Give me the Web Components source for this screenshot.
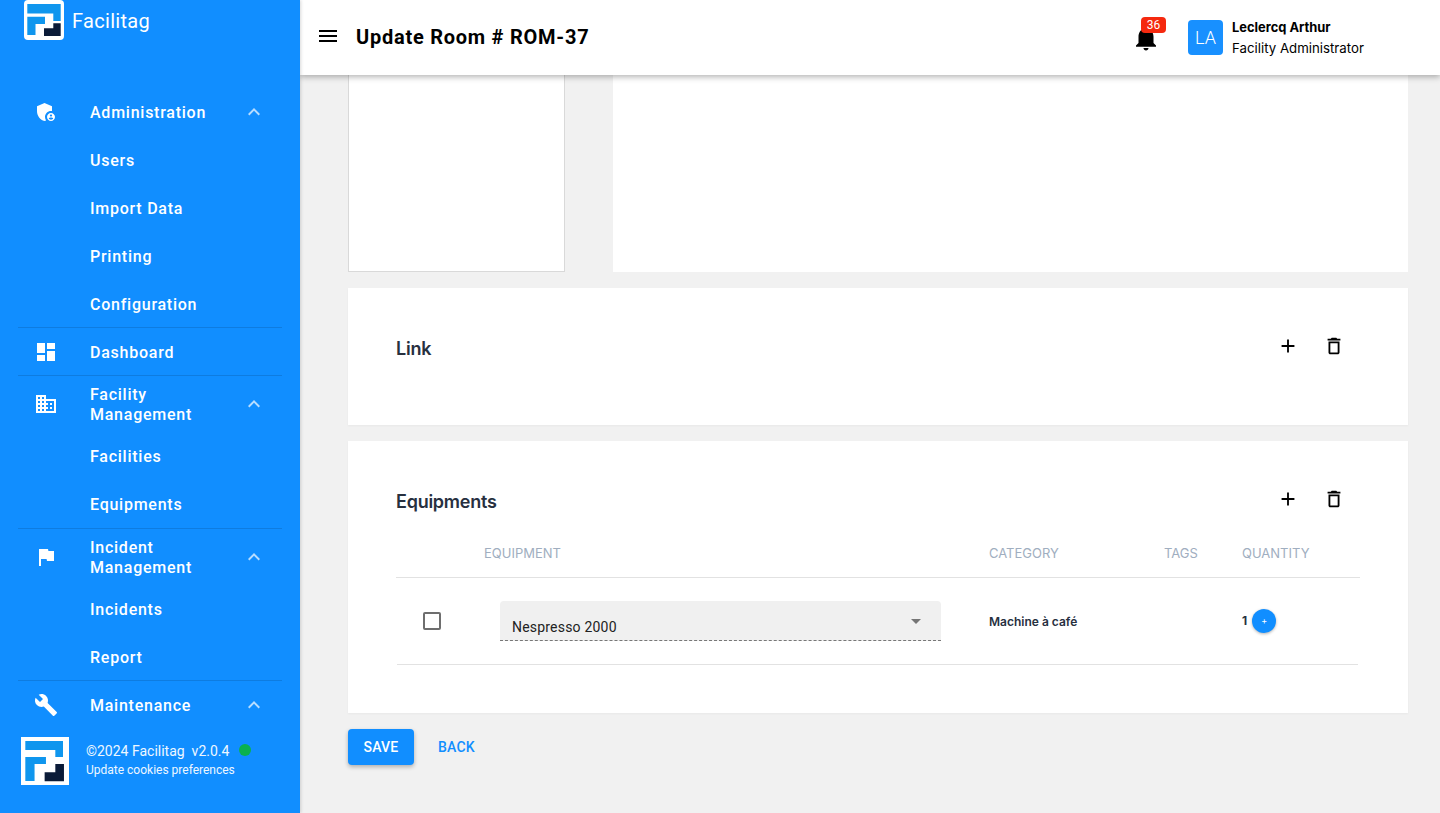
<!DOCTYPE html>
<html lang="en">
<head>
<meta charset="utf-8">
<title>Update Room</title>
<style>
  html, body { margin: 0; height: 100%; overflow: hidden; }
  body { font-family: Roboto, "Liberation Sans", sans-serif; background: #f1f1f1; }
</style>
</head>
<body>
<app-shell>
  <side-nav slot="side">
    <nav-group icon="admin" label="Administration" chevron>
      <nav-link>Users</nav-link>
      <nav-link>Import Data</nav-link>
      <nav-link>Printing</nav-link>
      <nav-link>Configuration</nav-link>
    </nav-group>
    <nav-group icon="dashboard" label="Dashboard"></nav-group>
    <nav-group icon="business" label="Facility Management" chevron wide>
      <nav-link>Facilities</nav-link>
      <nav-link>Equipments</nav-link>
    </nav-group>
    <nav-group icon="flag" label="Incident Management" chevron>
      <nav-link>Incidents</nav-link>
      <nav-link>Report</nav-link>
    </nav-group>
    <nav-group icon="build" label="Maintenance" chevron plain></nav-group>
  </side-nav>
  <top-bar slot="top" heading="Update Room # ROM-37" badge="36" initials="LA" user="Leclercq Arthur" role="Facility Administrator"></top-bar>
  <room-form>
    <section-card heading="Link" style="min-height:137px"></section-card>
    <section-card heading="Equipments"><equipment-table></equipment-table></section-card>
  </room-form>
</app-shell>

<script>
const ICONS = {
  admin: '<path d="M17 11c.34 0 .67.04 1 .09V6.27L10.5 3 3 6.27v4.91c0 4.54 3.2 8.79 7.5 9.82.55-.13 1.08-.32 1.6-.55-.69-.98-1.1-2.17-1.1-3.45 0-3.31 2.69-6 6-6z"/><path d="M17 13c-2.21 0-4 1.79-4 4s1.79 4 4 4 4-1.79 4-4-1.79-4-4-4zm0 1.38c.62 0 1.12.51 1.12 1.12s-.51 1.12-1.12 1.12-1.12-.51-1.12-1.12.5-1.12 1.12-1.12zm0 5.37c-.93 0-1.74-.46-2.24-1.17.05-.72 1.51-1.08 2.24-1.08s2.19.36 2.24 1.08c-.5.71-1.31 1.17-2.24 1.17z"/>',
  dashboard: '<path d="M3 13h8V3H3v10zm0 8h8v-6H3v6zm10 0h8V11h-8v10zm0-18v6h8V3h-8z"/>',
  business: '<path d="M12 7V3H2v18h20V7H12zM6 19H4v-2h2v2zm0-4H4v-2h2v2zm0-4H4V9h2v2zm0-4H4V5h2v2zm4 12H8v-2h2v2zm0-4H8v-2h2v2zm0-4H8V9h2v2zm0-4H8V5h2v2zm10 12h-8v-2h2v-2h-2v-2h2v-2h-2V9h8v10zm-2-8h-2v2h2v-2zm0 4h-2v2h2v-2z"/>',
  flag: '<path d="M14.4 6L14 4H5v17h2v-7h5.6l.4 2h7V6z"/>',
  build: '<path d="M22.7 19l-9.1-9.1c.9-2.3.4-5-1.5-6.9-2-2-5-2.4-7.4-1.3L9 6 6 9 1.6 4.7C.4 7.1.9 10.1 2.9 12.1c1.9 1.9 4.6 2.4 6.9 1.5l9.1 9.1c.4.4 1 .4 1.4 0l2.3-2.3c.5-.4.5-1.1.1-1.4z"/>',
  chevron: '<path d="M12 8l-6 6 1.41 1.41L12 10.83l4.59 4.58L18 14z"/>',
  bell: '<path d="M12 22c1.1 0 2-.9 2-2h-4c0 1.1.89 2 2 2zm6-6v-5c0-3.07-1.64-5.64-4.5-6.32V4c0-.83-.67-1.5-1.5-1.5s-1.5.67-1.5 1.5v.68C7.63 5.36 6 7.92 6 11v5l-2 2v1h16v-1l-2-2z"/>',
  menu: '<path d="M3 18h18v-2H3v2zm0-5h18v-2H3v2zm0-7v2h18V6H3z"/>',
  add: '<path d="M19 13h-6v6h-2v-6H5v-2h6V5h2v6h6v2z"/>',
  trash: '<path d="M6 19c0 1.1.9 2 2 2h8c1.1 0 2-.9 2-2V7H6v12zM8 9h8v10H8V9zm7.5-5l-1-1h-5l-1 1H5v2h14V4z"/>'
};
const icon = (name, size = 24) => `<svg width="${size}" height="${size}" viewBox="0 0 24 24" fill="currentColor" aria-hidden="true">${ICONS[name]}</svg>`;
const brandMark = `
  <path fill="#0f96ee" d="M3.3 4h33.4v17h-7.4v-7.5H3.3z"/>
  <path fill="#0f96ee" d="M3.3 16.7H21V24h-9.5v11H3.3z"/>
  <path fill="#0b1b38" d="M29.3 23.3h7.4V36H20v-7.7h9.3z"/>`;
const footerMark = `
  <path fill="#0f96ee" d="M3.6 3.3H35v13.4h-6.4v-5.9h-25z"/>
  <path fill="#0f96ee" d="M3.6 16.7h17.2v5.8h-9.5v14.2H3.6z"/>
  <path fill="#0b1b38" d="M28.6 22.5h7.2v14.4H19.7v-7.5h8.9z"/>`;

class AppShell extends HTMLElement {
  constructor() {
    super();
    this.attachShadow({ mode: 'open' });
    this.shadowRoot.innerHTML = `<style>
      :host { display: flex; height: 813px; overflow: hidden; }
      .column { flex: 1; min-width: 0; display: flex; flex-direction: column; }
    </style>
    <slot name="side"></slot>
    <div class="column">
      <slot name="top"></slot>
      <slot></slot>
    </div>`;
  }
}
customElements.define('app-shell', AppShell);

class SideNav extends HTMLElement {
  constructor() {
    super();
    this.attachShadow({ mode: 'open' });
    this.shadowRoot.innerHTML = `<style>
      :host { display: flex; flex-direction: column; width: 300px; height: 813px; flex: none; background: #118eff; color: #fff; box-shadow: 1px 0 3px rgba(0,0,0,.15); position: relative; z-index: 3; }
      .brand { height: 88px; flex: none; display: flex; align-items: flex-start; padding-left: 24px; gap: 8px; box-sizing: border-box; }
      .brand svg { display: block; }
      .brand span { font-size: 20px; line-height: 42px; letter-spacing: .3px; }
      nav { flex: 1; min-height: 0; overflow: hidden; padding: 0 18px; }
      footer { height: 84px; flex: none; box-sizing: border-box; padding: 8px 0 0 21px; display: flex; gap: 17px; }
      footer svg { display: block; }
      .copy { font-size: 14px; line-height: 16px; margin-top: 6px; display: flex; align-items: center; white-space: pre; color: #eef7ff; }
      .dot { width: 12px; height: 12px; border-radius: 50%; background: #0ab14f; margin-left: 10px; margin-top: -3px; }
      .cookies { font-size: 12px; line-height: 16px; margin-top: 3px; color: #eef7ff; }
    </style>
    <div class="brand">
      <svg width="40" height="40" viewBox="0 0 40 40"><rect width="40" height="40" rx="4" fill="#fff"/>${brandMark}</svg>
      <span>Facilitag</span>
    </div>
    <nav><slot></slot></nav>
    <footer>
      <svg width="48" height="48" viewBox="0 0 40 40"><rect width="40" height="40" fill="#fff"/>${footerMark}</svg>
      <div>
        <div class="copy">©2024 Facilitag  v2.0.4<span class="dot"></span></div>
        <div class="cookies">Update cookies preferences</div>
      </div>
    </footer>`;
  }
}
customElements.define('side-nav', SideNav);

class NavGroup extends HTMLElement {
  constructor() {
    super();
    this.attachShadow({ mode: 'open' });
  }
  connectedCallback() {
    const chevron = this.hasAttribute('chevron') ? `<span class="chev">${icon('chevron')}</span>` : '';
    this.shadowRoot.innerHTML = `<style>
      :host { display: block; box-shadow: inset 0 -1px 0 rgba(0,0,0,.12); }
      :host([wide]) { padding-bottom: 1px; }
      :host([plain]) { box-shadow: none; }
      .head { display: flex; align-items: center; min-height: 48px; padding: 8px 16px; box-sizing: border-box; gap: 32px; }
      .head svg { display: block; }
      .label { flex: 1; font-size: 16px; font-weight: 500; line-height: 20px; letter-spacing: .75px; max-width: 150px; transform: translateY(1px); }
      .chev { margin-left: auto; opacity: .7; }
    </style>
    <div class="head">
      ${icon(this.getAttribute('icon'))}
      <span class="label">${this.getAttribute('label')}</span>
      ${chevron}
    </div>
    <slot></slot>`;
  }
}
customElements.define('nav-group', NavGroup);

class NavLink extends HTMLElement {
  constructor() {
    super();
    this.attachShadow({ mode: 'open' });
    this.shadowRoot.innerHTML = `<style>
      :host { display: flex; align-items: center; height: 48px; padding-left: 72px; font-size: 16px; font-weight: 500; letter-spacing: .75px; }
    </style><slot></slot>`;
  }
}
customElements.define('nav-link', NavLink);

class TopBar extends HTMLElement {
  constructor() {
    super();
    this.attachShadow({ mode: 'open' });
  }
  connectedCallback() {
    this.shadowRoot.innerHTML = `<style>
      :host { display: flex; align-items: center; height: 75px; flex: none; background: #fff; box-shadow: 0 2px 6px rgba(0,0,0,.3); position: relative; z-index: 2; color: #000; }
      .menu { margin-left: 16px; display: block; }
      h1 { margin: 0 0 0 16px; font-size: 20px; font-weight: 700; letter-spacing: .75px; flex: 1; line-height: 24px; transform: translateY(-1px); }
      .bell { position: relative; width: 30px; height: 30px; }
      .bell svg { display: block; }
      .badge { position: absolute; left: 10px; top: -6px; width: 25px; height: 16px; border-radius: 4px; background: #f5290f; color: #fff; font-size: 12px; line-height: 16px; text-align: center; }
      .avatar { width: 35px; height: 35px; margin-left: 27px; border-radius: 4px; background: #1890ff; color: #fff; font-size: 18px; font-weight: 300; line-height: 35px; text-align: center; margin-top: -1px; }
      .who { margin: 0 0 0 9px; font-family: Inter, Roboto, sans-serif; font-size: 13.25px; line-height: 21px; width: 208px; white-space: nowrap; box-sizing: border-box; }
      .who b { display: block; font-weight: 700; font-size: 12.9px; }
    </style>
    <span class="menu">${icon('menu')}</span>
    <h1>${this.getAttribute('heading')}</h1>
    <div class="bell">${icon('bell', 30)}<span class="badge">${this.getAttribute('badge')}</span></div>
    <div class="avatar">${this.getAttribute('initials')}</div>
    <div class="who"><b>${this.getAttribute('user')}</b>${this.getAttribute('role')}</div>`;
  }
}
customElements.define('top-bar', TopBar);

class RoomForm extends HTMLElement {
  constructor() {
    super();
    this.attachShadow({ mode: 'open' });
    this.shadowRoot.innerHTML = `<style>
      :host { display: flex; flex-direction: column; gap: 16px; padding: 0 32px 0 48px; flex: 1; min-height: 0; overflow: hidden; }
      .top { display: flex; gap: 48px; height: 197px; flex: none; }
      .picture { width: 217px; box-sizing: border-box; background: #fff; border: 1px solid #d9d9d9; border-top: 0; }
      .details { flex: 1; background: #fff; }
      .actions { display: flex; align-items: center; gap: 24px; }
      button { font: 500 14px Roboto, "Liberation Sans", sans-serif; height: 36px; border: 0; border-radius: 4px; letter-spacing: .2px; padding: 0; }
      .save { width: 66px; background: #118eff; color: #fff; box-shadow: 0 2px 4px rgba(0,0,0,.28); }
      .back { width: 36px; background: none; color: #118eff; }
    </style>
    <div class="top"><div class="picture"></div><div class="details"></div></div>
    <slot></slot>
    <div class="actions"><button class="save">SAVE</button><button class="back">BACK</button></div>`;
  }
}
customElements.define('room-form', RoomForm);

class SectionCard extends HTMLElement {
  constructor() {
    super();
    this.attachShadow({ mode: 'open' });
  }
  connectedCallback() {
    this.shadowRoot.innerHTML = `<style>
      :host { display: block; box-sizing: border-box; background: #fff; padding: 48px; box-shadow: 0 1px 2px rgba(0,0,0,.04); }
      .head { display: flex; margin-bottom: 16px; }
      h2 { flex: 1; margin: 0; font-family: Inter, Roboto, sans-serif; font-size: 18px; font-weight: 600; letter-spacing: -.25px; line-height: 24px; color: #27303f; transform: translateY(1px); }
      .tools { display: flex; gap: 24px; margin: -1px 15px 0 0; height: 22px; color: #000; }
      .tools svg { display: block; }
    </style>
    <div class="head">
      <h2>${this.getAttribute('heading')}</h2>
      <div class="tools">${icon('add', 22)}${icon('trash', 22)}</div>
    </div>
    <slot></slot>`;
  }
}
customElements.define('section-card', SectionCard);

class EquipmentTable extends HTMLElement {
  constructor() {
    super();
    this.attachShadow({ mode: 'open' });
    this.shadowRoot.innerHTML = `<style>
      :host { display: block; font-family: Inter, Roboto, sans-serif; }
      .row { display: grid; grid-template-columns: 88px 505px 175px 78px 1fr; align-items: center; }
      .labels { height: 49px; box-sizing: border-box; border-bottom: 1px solid #e2e2e2; font-size: 13px; color: #a0aec0; }
      .entry { height: 87px; box-sizing: border-box; border-bottom: 1px solid #e2e2e2; margin: 0 2px 0 1px; grid-template-columns: 87px 505px 175px 78px 1fr; color: #27303f; }
      .check { width: 18px; height: 18px; box-sizing: border-box; border: 2px solid #6e6e6e; border-radius: 2px; margin-left: 26px; }
      .select { display: flex; height: 40px; width: 441px; margin-left: 16px; margin-top: -1px; box-sizing: border-box; background: #f0f0f0; border-bottom: 1px dashed #777; border-radius: 4px 4px 0 0; padding: 0 20px 0 12px; font-family: Roboto, sans-serif; font-size: 14px; color: #222; letter-spacing: .2px; line-height: 16px; position: relative; }
      .select span { align-self: flex-end; padding-bottom: 5px; }
      .select i { position: absolute; right: 20px; top: 18px; border: 5px solid transparent; border-top-color: #757575; border-bottom: 0; }
      .cat { font-size: 12px; font-weight: 600; }
      .qty { display: flex; font-size: 12px; font-weight: 700; align-items: center; }
      .qty span { margin-top: -2px; }
      .plus { width: 24px; height: 24px; margin-left: 5px; border-radius: 50%; background: #118eff; color: #fff; font-size: 9px; line-height: 24px; text-align: center; font-weight: 400; box-shadow: 0 1px 3px rgba(0,0,0,.3); }
    </style>
    <div class="row labels"><span></span><span>EQUIPMENT</span><span>CATEGORY</span><span>TAGS</span><span>QUANTITY</span></div>
    <div class="row entry">
      <div class="check"></div>
      <div class="select"><span>Nespresso 2000</span><i></i></div>
      <div class="cat">Machine à café</div>
      <div></div>
      <div class="qty"><span>1</span><div class="plus">+</div></div>
    </div>`;
  }
}
customElements.define('equipment-table', EquipmentTable);
</script>
</body>
</html>
